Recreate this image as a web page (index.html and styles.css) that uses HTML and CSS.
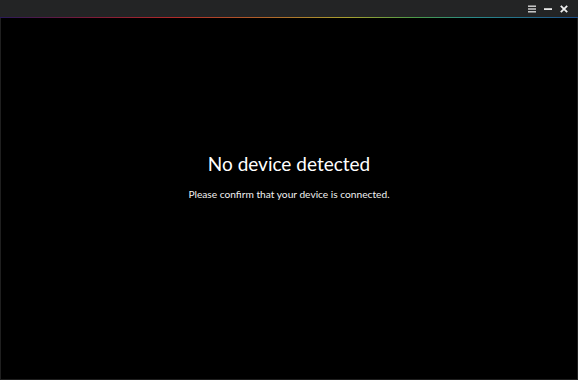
FILE: index.html
```html
<!DOCTYPE html>
<html>

<head>
    <title>No device detected</title>
    <link rel="stylesheet" href="styles.css">
</head>

<body>
    <div class="window">
        <div class="titlebar">
            <div class="controls">
                <!-- menu -->
                <svg class="ctl" width="10" height="10" viewBox="0 0 10 10">
                    <rect x="1" y="1.5" width="8" height="1.4" fill="#d8d8d8" />
                    <rect x="1" y="4.3" width="8" height="1.4" fill="#d8d8d8" />
                    <rect x="1" y="7.1" width="8" height="1.4" fill="#d8d8d8" />
                </svg>
                <!-- minimize -->
                <svg class="ctl" width="10" height="10" viewBox="0 0 10 10">
                    <rect x="1" y="4.2" width="8" height="1.8" fill="#e8e8e8" />
                </svg>
                <!-- close -->
                <svg class="ctl" width="10" height="10" viewBox="0 0 10 10">
                    <path d="M1.8 1.8 L8.2 8.2 M8.2 1.8 L1.8 8.2" stroke="#f0f0f0" stroke-width="1.8" />
                </svg>
            </div>
        </div>
        <div class="accent"></div>
        <div class="content">
            <h1 class="title">No device detected</h1>
            <p class="message">Please confirm that your device is connected.</p>
        </div>
    </div>
</body>

</html>
```

FILE: styles.css
```css
html,
body {
    margin: 0;
    height: 100%;
    background: #000;
}

.window {
    display: flex;
    flex-direction: column;
    height: 100%;
    font-family: Lato, "Open Sans", sans-serif;
}

.titlebar {
    height: 17px;
    background: #232425;
    display: flex;
    justify-content: flex-end;
    align-items: center;
}

.controls {
    display: flex;
    gap: 6px;
    padding-right: 9px;
    margin-top: 1px;
}

.accent {
    height: 1px;
    background: linear-gradient(to right, #2a1a5a 0%, #7a1a3a 15%, #b02a2a 30%, #b0602a 45%, #a8a030 60%, #4a9a4a 72%, #2a8a8a 82%, #1e4f8a 100%);
}

.content {
    flex: 1;
    background: #000;
    border: 1px solid #1f1f1f;
    border-top: none;
    display: flex;
    flex-direction: column;
    align-items: center;
    justify-content: center;
    padding-bottom: 44px;
    color: #fff;
}

.title {
    margin: 0;
    font-size: 19px;
    line-height: 24px;
    font-weight: 400;
}

.message {
    margin: 11px 0 0;
    font-size: 10.2px;
    line-height: 14px;
    color: #f0f0f0;
}
```
